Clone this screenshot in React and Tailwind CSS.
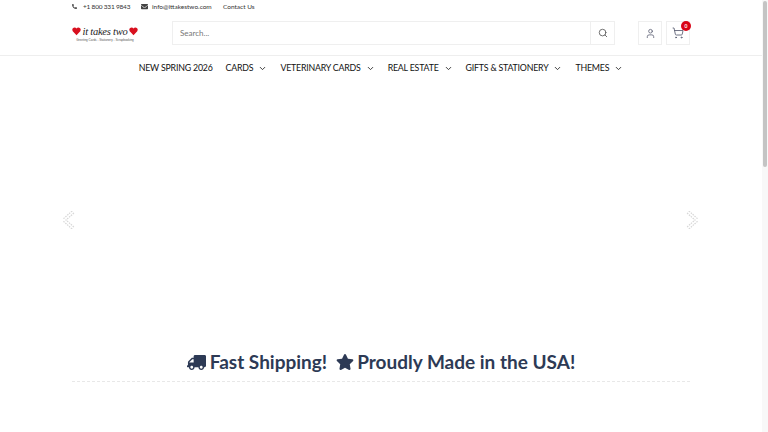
import { ChevronDown, Search, User, ShoppingCart } from "lucide-react";
import { FaPhoneAlt, FaEnvelope, FaTruck, FaStar } from "react-icons/fa";

const navItems = [
  { label: "NEW SPRING 2026", caret: false },
  { label: "CARDS", caret: true },
  { label: "VETERINARY CARDS", caret: true },
  { label: "REAL ESTATE", caret: true },
  { label: "GIFTS & STATIONERY", caret: true },
  { label: "THEMES", caret: true },
];

function Heart() {
  return (
    <svg width="9" height="9" viewBox="0 0 24 24" className="shrink-0">
      <path d="M12 22 2 11C-1 6 2 1 7 1c2 0 4 1 5 3 1-2 3-3 5-3 5 0 8 5 5 10z" fill="#d8101f" />
    </svg>
  );
}

function Logo() {
  return (
    <div className="flex w-[66px] flex-col items-center">
      <div className="flex items-center justify-between self-stretch">
        <Heart />
        <span className="font-['Liberation_Serif',serif] text-[10.5px] leading-[13px] tracking-[-0.25px] whitespace-nowrap italic text-[#222]">
          it takes two
        </span>
        <Heart />
      </div>
      <span className="font-['Liberation_Sans',sans-serif] text-[3px] leading-[4px] whitespace-nowrap text-[#555]">
        Greeting Cards - Stationery - Scrapbooking
      </span>
    </div>
  );
}

function Arrow({ left }) {
  const d = left ? "M12 1 3 9l9 8" : "M2 1l9 8-9 8";
  return (
    <svg width="14" height="18" viewBox="0 0 14 18" fill="none">
      <path d={d} stroke="#d8d8d8" strokeWidth="4" strokeDasharray="1.5 1" />
      <path d={d} stroke="#fff" strokeWidth="1.5" />
    </svg>
  );
}

export default function App() {
  return (
    <div className="flex h-[432px] w-[768px] overflow-hidden bg-white font-['Lato',sans-serif]">
      <div className="flex w-[762px] shrink-0 flex-col">
        {/* top bar */}
        <div className="flex h-[13px] items-center pl-[72px] text-[6.5px] text-[#333]">
          <span className="flex w-[69px] items-center gap-[6px] tracking-[-0.2px]">
            <FaPhoneAlt size={5} color="#444" />
            +1 800 331 9843
          </span>
          <span className="flex w-[82px] items-center gap-[4px]">
            <FaEnvelope size={7} color="#444" />
            info@ittakestwo.com
          </span>
          <span>Contact Us</span>
        </div>

        {/* header */}
        <div className="flex h-[43px] items-center border-b border-[#eeeeee] px-[72px] pb-[2px]">
          <div className="w-[100px] shrink-0">
            <Logo />
          </div>
          <div className="flex h-[24px] w-[444px] border border-[#efefef]">
            <div className="flex flex-1 items-center pl-[7px] text-[8px] text-[#777]">Search...</div>
            <div className="flex w-[24px] items-center justify-center border-l border-[#efefef]">
              <Search size={10} stroke="#555" strokeWidth={2} />
            </div>
          </div>
          <div className="ml-[23px] flex h-[24px] w-[24px] items-center justify-center border border-[#efefef]">
            <User size={11} stroke="#5b5f73" strokeWidth={1.75} />
          </div>
          <div className="relative ml-[4px] flex h-[24px] w-[24px] items-center justify-center border border-[#efefef]">
            <ShoppingCart size={12} stroke="#5b5f73" strokeWidth={1.75} />
            <span className="absolute top-[-1px] right-[-2px] flex h-[10px] w-[10px] items-center justify-center rounded-full bg-[#d90416] text-[5px] leading-none font-bold text-white">
              0
            </span>
          </div>
        </div>

        {/* nav */}
        <nav className="flex h-[24px] items-center justify-center gap-[13px] text-[8.8px] font-normal tracking-[-0.2px] text-[#111]">
          {navItems.map((item) => (
            <span key={item.label} className="flex items-center gap-[5px] whitespace-nowrap">
              {item.label}
              {item.caret && <ChevronDown size={9} strokeWidth={2.5} stroke="#333" />}
            </span>
          ))}
        </nav>

        {/* carousel */}
        <div className="flex h-[262px] items-center justify-between pt-[18px] pr-[62px] pl-[61px]">
          <Arrow left />
          <Arrow />
        </div>

        {/* shipping banner */}
        <div className="mx-[72px] flex h-[40px] items-center justify-center gap-[9px] border-b border-dashed border-[#e8e8e8] pt-px text-[19px] font-bold text-[#2d3a55]">
          <span className="flex items-center gap-[4px]">
            <FaTruck size={19} color="#2d3a55" className="-scale-x-100" />
            Fast Shipping!
          </span>
          <span className="flex items-center gap-[3px]">
            <FaStar size={18} color="#2d3a55" />
            Proudly Made in the USA!
          </span>
        </div>
      </div>

      {/* scrollbar */}
      <div className="flex-1 bg-[#f8f8f8] pt-px pr-[1px] pl-px">
        <div className="h-[166px] rounded-[2px] bg-[#c4c4c4]" />
      </div>
    </div>
  );
}
